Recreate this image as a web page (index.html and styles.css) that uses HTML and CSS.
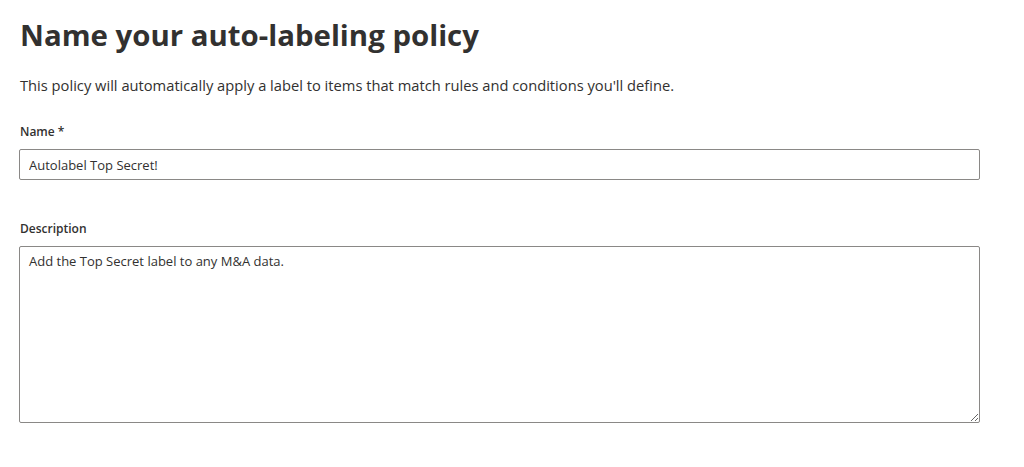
FILE: index.html
```html
<!DOCTYPE html>
<html lang="en">
<head>
    <meta charset="UTF-8">
    <meta name="viewport" content="width=device-width, initial-scale=1.0">
    <title>Name your auto-labeling policy</title>
    <link rel="stylesheet" href="styles.css">
</head>
<body>
    <div class="page">
        <h1>Name your auto-labeling policy</h1>
        <p class="intro">This policy will automatically apply a label to items that match rules and conditions you'll define.</p>
        <div class="field">
            <label for="name">Name <span class="req">*</span></label>
            <input type="text" id="name" value="Autolabel Top Secret!">
        </div>
        <div class="field field-desc">
            <label for="desc">Description</label>
            <textarea id="desc">Add the Top Secret label to any M&amp;A data.</textarea>
        </div>
    </div>
</body>
</html>
```

FILE: styles.css
```css
body {
    margin: 0;
    font-family: "Open Sans", "Noto Sans", Arial, sans-serif;
    color: #323130;
    background: #fff;
}

.page {
    padding: 14px 44px 0 19px;
}

h1 {
    font-size: 29.4px;
    font-weight: 700;
    margin: 0 0 19px 1px;
    line-height: 42px;
}

.intro {
    font-size: 14.7px;
    margin: 0 0 29px 1px;
    line-height: 20px;
}

.field label {
    display: block;
    font-size: 12px;
    font-weight: 600;
    margin: 0 0 9px 1px;
    line-height: 16px;
}

.field input,
.field textarea {
    display: block;
    width: 100%;
    box-sizing: border-box;
    border: 1px solid #8a8886;
    border-radius: 2px;
    font-family: inherit;
    font-size: 13px;
    color: #323130;
    padding: 0 9px;
    outline: none;
}

.field input {
    height: 31px;
}

.field-desc {
    margin-top: 41px;
}

.field textarea {
    height: 177px;
    padding-top: 5px;
    resize: vertical;
}
```
